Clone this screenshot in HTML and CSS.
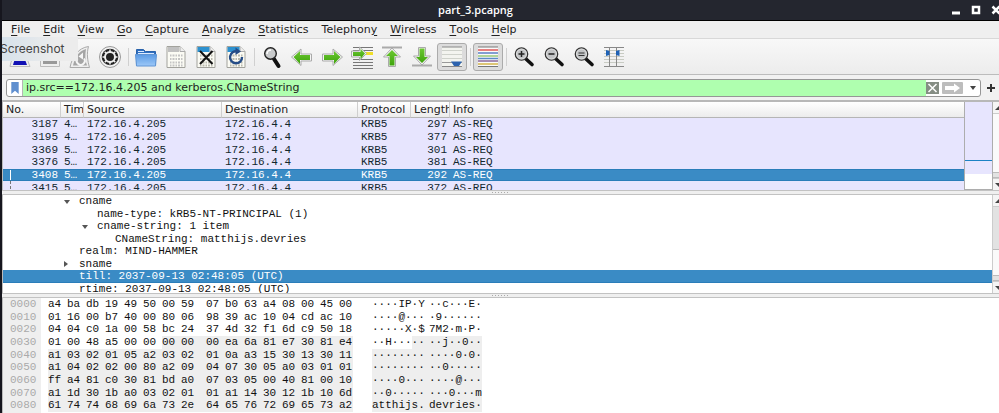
FILE: index.html
```html
<!DOCTYPE html>
<html lang="en">
<head>
<meta charset="utf-8">
<title>part_3.pcapng</title>
<link rel="stylesheet" href="styles.css">
</head>
<body>
<svg class="defs" aria-hidden="true">
  <defs>
    <linearGradient id="green" x1="0" y1="0" x2="0" y2="1"><stop offset="0" stop-color="#6cc832"/><stop offset="1" stop-color="#3ea30c"/></linearGradient>
    <linearGradient id="folder" x1="0" y1="0" x2="0" y2="1"><stop offset="0" stop-color="#5a9ae4"/><stop offset="1" stop-color="#9cc8f8"/></linearGradient>
    <symbol id="lens" viewBox="0 0 24 24">
      <path d="M14 14l6 5.500" stroke="#111" stroke-width="3.600" stroke-linecap="round"/>
      <circle cx="9.500" cy="9" r="6.200" fill="#c2c4c6" stroke="#333" stroke-width="1.300"/>
      <circle cx="9.500" cy="9" r="5" fill="none" stroke="#e4e4e4" stroke-width=".8"/>
    </symbol>
    <symbol id="page" viewBox="0 0 24 24">
      <path d="M3 1.500h13l5 5v16H3z" fill="#fbfbf4" stroke="#a2a29c"/>
      <path d="M16 1.500v5h5" fill="#eee" stroke="#aaa"/>
    </symbol>
    <symbol id="digits" viewBox="0 0 24 24">
      <path d="M6 10.500h13M6 14h13M6 17.500h13M6 20.500h13" stroke-width="2" stroke-dasharray="1.500 1 2 1"/>
    </symbol>
  </defs>
</svg>
<div class="window">
  <header class="titlebar">
    <h1>part_3.pcapng</h1>
    <div class="window-buttons">
      <button aria-label="Minimize"><svg viewBox="0 0 10 10"><path d="M1 8h8" stroke="#fff" stroke-width="3"/></svg></button>
      <button aria-label="Maximize"><svg viewBox="0 0 10 10"><path d="M2 2h6v6H2z" fill="none" stroke="#fff" stroke-width="2.500"/></svg></button>
      <button aria-label="Close"><svg viewBox="0 0 10 10"><path d="M1.500 1.500l7 7M8.500 1.500l-7 7" stroke="#fff" stroke-width="2.500"/></svg></button>
    </div>
  </header>

  <nav class="menubar">
    <button><u>F</u>ile</button><button><u>E</u>dit</button><button><u>V</u>iew</button><button><u>G</u>o</button><button><u>C</u>apture</button><button><u>A</u>nalyze</button><button><u>S</u>tatistics</button><button>Telephon<u>y</u></button><button><u>W</u>ireless</button><button><u>T</u>ools</button><button><u>H</u>elp</button>
  </nav>

  <div class="toolbar">
    <button aria-label="Start capture"><svg viewBox="0 0 24 24"><path d="M2 21.500C4 10 10 3 20 2c-2 6-1 13 2 19.500z" fill="#eee" stroke="#bbb"/><path d="M5 20C7 12 11 6 17 4.500c-1 5 0 11 2 15.500z" fill="#1111b4"/></svg></button>
    <button aria-label="Stop capture"><svg viewBox="0 0 24 24"><path d="M2.500 3.500h19v18h-19z" fill="#eee" stroke="#bbb"/><path d="M5 6h14v13H5z" fill="#999"/></svg></button>
    <button aria-label="Restart capture"><svg viewBox="0 0 24 24"><path d="M2 22.500C4 12 10 3 20.500 1.500c-2 7-1 14 1 21z" fill="#eee" stroke="#aaa"/><path d="M5 20.500C7 12 11 6 18 4c-1 6-1 12 1 16.500z" fill="#a5a5a5"/><path d="M9.500 13.500a4 4 0 1 0 6.500 0" fill="none" stroke="#f5f5f5" stroke-width="2"/><path d="M10.500 11.500l4.500-4v7z" fill="#f5f5f5"/></svg></button>
    <button aria-label="Capture options"><svg viewBox="0 0 24 24"><circle cx="12" cy="12" r="10.500" fill="#f1f1f1" stroke="#999"/><circle cx="12" cy="12" r="8.300" fill="#222"/><circle cx="12" cy="12" r="5" fill="none" stroke="#eee" stroke-width="2"/><path d="M12 4.500v3M12 16.500v3M4.500 12h3M16.500 12h3M6.700 6.700l2 2M15.300 15.300l2 2M17.300 6.700l-2 2M8.700 15.300l-2 2" stroke="#eee" stroke-width="1.500"/><circle cx="12" cy="12" r="2.800" fill="#222"/></svg></button>
    <i class="sep"></i>
    <button aria-label="Open file"><svg viewBox="0 0 24 24"><path d="M2.500 20V4.500h7l2 2h10V20z" fill="#2f6fc0" stroke="#2a63ab"/><path d="M4 6.500h6M4 8.500h16" stroke="#dceaff"/><path d="M1.500 9.500h21l-1 11.500h-19z" fill="url(#folder)" stroke="#6095d4"/></svg></button>
    <button aria-label="Save file"><svg viewBox="0 0 24 24"><use href="#page"/><path d="M4 2h11v5H4z" fill="#c0c0c0"/><use href="#digits" stroke="#c4c4c4"/></svg></button>
    <button aria-label="Close file"><svg viewBox="0 0 24 24"><use href="#page"/><path d="M3.500 2h12v5h-12z" fill="#2d91cf"/><use href="#digits" stroke="#b9b9ad"/><path d="M6 6l12.500 13M18.500 6L6 19" stroke="#111" stroke-width="2"/></svg></button>
    <button aria-label="Reload file"><svg viewBox="0 0 24 24"><use href="#page"/><path d="M3.500 2h12v5h-12z" fill="#2d91cf"/><use href="#digits" stroke="#b9b9ad"/><path d="M18 12a6 6 0 1 1-4.500-5.500" fill="none" stroke="#264d87" stroke-width="2.400"/><path d="M11.500 2.500l5.500 4-5.500 3.500z" fill="#264d87"/></svg></button>
    <i class="sep"></i>
    <button aria-label="Find packet"><svg viewBox="0 0 24 24"><path d="M14 14l4.500 7" stroke="#111" stroke-width="4" stroke-linecap="round"/><circle cx="10.500" cy="8.500" r="5.800" fill="#c8cacb" stroke="#222" stroke-width="1.400"/><path d="M7 9a4 4 0 0 1 4-4" fill="none" stroke="#fff" stroke-width="1.500"/></svg></button>
    <button aria-label="Previous packet"><svg viewBox="0 0 24 24"><path d="M1.500 12L11 4v5h10.500v7H11v4.500z" fill="#f5f5f5" stroke="#aaa"/><path d="M3.500 12L10 6v4h10v5H10v4z" fill="url(#green)"/></svg></button>
    <button aria-label="Next packet"><svg viewBox="0 0 24 24"><path d="M22.500 12L13 4v5H2.500v7H13v4.500z" fill="#f5f5f5" stroke="#aaa"/><path d="M20.500 12L14 6v4H4v5h10v4z" fill="url(#green)"/></svg></button>
    <button aria-label="Go to packet"><svg viewBox="0 0 24 24"><path d="M3 2.500h20M3 5.500h20M3 14.500h20M3 17.500h20M3 20.500h20M3 23.500h20" stroke="#777"/><path d="M16 8.500h7" stroke="#f0df27" stroke-width="3"/><path d="M16.500 8.500L9.500 2v4H1.500v6h8v3.500z" fill="#f5f5f5" stroke="#aaa"/><path d="M15 8.500L10.500 4v3H3v4h7.500v3z" fill="url(#green)"/></svg></button>
    <button aria-label="First packet"><svg viewBox="0 0 24 24"><path d="M2 2.500h20" stroke="#aaa" stroke-width="2"/><path d="M12 3L3.500 12h5v9.500h7V12h5z" fill="#f5f5f5" stroke="#aaa"/><path d="M12 5L6 11h3.500v9.500h5V11H18z" fill="url(#green)"/></svg></button>
    <button aria-label="Last packet"><svg viewBox="0 0 24 24"><path d="M2 20.500h20" stroke="#aaa" stroke-width="2"/><path d="M12 20L3.500 11h5V2.500h7V11h5z" fill="#f5f5f5" stroke="#aaa"/><path d="M12 18L6 12h3.500V3.500h5V12H18z" fill="url(#green)"/></svg></button>
    <button class="pressed" aria-label="Auto scroll"><svg viewBox="0 0 24 24"><path d="M2 2h20v20H2z" fill="#f3f4ef"/><path d="M2 2h20M2 21.500h20" stroke="#888"/><path d="M2 5.500h20M2 9.500h20M2 13.500h20" stroke="#cfd2cb"/><path d="M2 17.500h20" stroke="#999"/><path d="M11 16.500h11l-3 4.500h-5z" fill="#2d63ae"/></svg></button>
    <i class="sep"></i>
    <button class="pressed" aria-label="Colorize packets"><svg viewBox="0 0 24 24"><path d="M2 2h20v20H2z" fill="#fafafa"/><path d="M2 2h20M2 21.500h20" stroke="#777"/><path d="M2 5h20" stroke="#df5757" stroke-width="1.500"/><path d="M2 8h20" stroke="#5a7fc4" stroke-width="1.500"/><path d="M2 11h20" stroke="#99c977" stroke-width="1.500"/><path d="M2 13.500h20" stroke="#5b8bc7" stroke-width="1.500"/><path d="M2 16h20" stroke="#8b689b" stroke-width="1.500"/><path d="M2 19h20" stroke="#d4b448" stroke-width="1.500"/></svg></button>
    <i class="sep"></i>
    <button aria-label="Zoom in"><svg viewBox="0 0 24 24"><use href="#lens"/><path d="M6.500 9h6M9.500 6v6" stroke="#222" stroke-width="1.500"/></svg></button>
    <button aria-label="Zoom out"><svg viewBox="0 0 24 24"><use href="#lens"/><path d="M6.500 9h6" stroke="#222" stroke-width="1.500"/></svg></button>
    <button aria-label="Normal size"><svg viewBox="0 0 24 24"><use href="#lens"/><path d="M6.500 8h6M6.500 10.500h6" stroke="#333" stroke-width="1.200"/></svg></button>
    <button aria-label="Resize columns"><svg viewBox="0 0 24 24"><path d="M2 5.500h20M2 8.500h20M2 11.500h20M2 14.500h20M2 17.500h20" stroke="#c8cbc3"/><path d="M2 2.500h20M2 21.500h20M7.500 2v19M14.500 2v19" stroke="#888"/><path d="M4 5l3.500 1v4L4 11zM17.500 5L14 6v4l3.500 1z" fill="#1f62b5"/></svg></button>
  </div>

  <form class="filterbar">
    <div class="filter">
      <button type="button" class="bookmark" aria-label="Filter bookmarks"><svg viewBox="0 0 8 13"><path d="M0 0h8v13L4 9.500 0 13z" fill="#5f8fcf"/></svg></button>
      <input type="text" aria-label="Display filter" spellcheck="false" value="ip.src==172.16.4.205 and kerberos.CNameString">
      <button type="button" class="clear" aria-label="Clear filter"><svg viewBox="0 0 13 12"><path d="M0 0h13v12H0z" fill="#858d84"/><path d="M2.500 2l8 8M10.500 2l-8 8" stroke="#fff" stroke-width="1.500"/></svg></button>
      <button type="button" class="apply" aria-label="Apply filter"><svg viewBox="0 0 21 12"><rect width="21" height="12" rx="1" fill="#bdbdbd"/><path d="M3 4h9V1.500L18 6l-6 4.500V8H3z" fill="#fff"/></svg></button>
      <button type="button" class="recent" aria-label="Recent filters"><svg viewBox="0 0 6 4"><path d="M0 0h6L3 4z" fill="#444"/></svg></button>
    </div>
    <button type="button" class="add" aria-label="Add filter button"><svg viewBox="0 0 8 8"><path d="M0 4h8M4 0v8" stroke="#333" stroke-width="2"/></svg></button>
  </form>

  <section class="pane packets">
    <div class="packet-list">
      <table>
        <colgroup><col class="c-no"><col class="c-time"><col class="c-src"><col class="c-dst"><col class="c-proto"><col class="c-len"><col></colgroup>
        <thead><tr><th>No.</th><th>Time</th><th>Source</th><th>Destination</th><th>Protocol</th><th>Length</th><th>Info</th></tr></thead>
        <tbody>
          <tr><td>3187</td><td>4…</td><td>172.16.4.205</td><td>172.16.4.4</td><td>KRB5</td><td>297</td><td>AS-REQ</td></tr>
          <tr><td>3195</td><td>4…</td><td>172.16.4.205</td><td>172.16.4.4</td><td>KRB5</td><td>377</td><td>AS-REQ</td></tr>
          <tr><td>3369</td><td>5…</td><td>172.16.4.205</td><td>172.16.4.4</td><td>KRB5</td><td>301</td><td>AS-REQ</td></tr>
          <tr><td>3376</td><td>5…</td><td>172.16.4.205</td><td>172.16.4.4</td><td>KRB5</td><td>381</td><td>AS-REQ</td></tr>
          <tr class="selected"><td>3408</td><td>5…</td><td>172.16.4.205</td><td>172.16.4.4</td><td>KRB5</td><td>292</td><td>AS-REQ</td></tr>
          <tr class="related"><td>3415</td><td>5…</td><td>172.16.4.205</td><td>172.16.4.4</td><td>KRB5</td><td>372</td><td>AS-REQ</td></tr>
        </tbody>
      </table>
    </div>
    <div class="minimap"><i class="before"></i><i class="mark"></i><i class="after"></i></div>
    <div class="scroll"><i class="up"></i><i class="track"></i><i class="thumb end"></i><i class="down"></i></div>
  </section>
  <div class="splitter"></div>

  <section class="pane details">
    <ul class="tree">
      <li class="l1 open">cname</li>
      <li class="l2">name-type: kRB5-NT-PRINCIPAL (1)</li>
      <li class="l2 open">cname-string: 1 item</li>
      <li class="l3">CNameString: matthijs.devries</li>
      <li class="l1">realm: MIND-HAMMER</li>
      <li class="l1 closed">sname</li>
      <li class="l1 selected">till: 2037-09-13 02:48:05 (UTC)</li>
      <li class="l1">rtime: 2037-09-13 02:48:05 (UTC)</li>
    </ul>
    <div class="scroll"><i class="up"></i><i class="thumb"></i><i class="track"></i><i class="thumb end"></i><i class="down"></i></div>
  </section>
  <div class="splitter"></div>

  <section class="pane hex" id="hex"></section>
  <div class="tooltip">Screenshot</div>
</div>
<script src="hex.js"></script>
</body>
</html>
```
FILE: hex.js
```js
// Each row: offset, bytes, two ASCII groups. Bytes from SHADED on belong to the selected layer.
const SHADED = 54;
const rows = [
  ["0000", "a4 ba db 19 49 50 00 59 07 b0 63 a4 08 00 45 00", "····IP·Y", "··c···E·"],
  ["0010", "01 16 00 b7 40 00 80 06 98 39 ac 10 04 cd ac 10", "····@···", "·9······"],
  ["0020", "04 04 c0 1a 00 58 bc 24 37 4d 32 f1 6d c9 50 18", "·····X·$", "7M2·m·P·"],
  ["0030", "01 00 48 a5 00 00 00 00 00 ea 6a 81 e7 30 81 e4", "··H·····", "··j··0··"],
  ["0040", "a1 03 02 01 05 a2 03 02 01 0a a3 15 30 13 30 11", "········", "····0·0·"],
  ["0050", "a1 04 02 02 00 80 a2 09 04 07 30 05 a0 03 01 01", "········", "··0·····"],
  ["0060", "ff a4 81 c0 30 81 bd a0 07 03 05 00 40 81 00 10", "····0···", "····@···"],
  ["0070", "a1 1d 30 1b a0 03 02 01 01 a1 14 30 12 1b 10 6d", "··0·····", "···0···m"],
  ["0080", "61 74 74 68 69 6a 73 2e 64 65 76 72 69 65 73 a2", "atthijs.", "devries·"]
];
const el = (cls, text) => {
  const s = document.createElement("span");
  s.className = cls;
  s.textContent = text || "";
  return s;
};
rows.forEach(([offset, bytes, left, right], r) => {
  const line = document.createElement("div");
  line.className = "hex-row";
  line.append(el("offset", offset));
  const group = el("bytes");
  bytes.split(" ").forEach((b, i) => {
    group.append(el(r * 16 + i >= SHADED ? "byte shaded" : "byte", b));
  });
  line.append(group);
  const ascii = el("ascii");
  [left, right].forEach((half, h) => {
    const start = r * 16 + h * 8;
    const plain = Math.min(8, Math.max(0, SHADED - start));
    const part = el("half");
    if (plain) part.append(el("plain", half.slice(0, plain)));
    if (plain < 8) part.append(el("fill shaded", half.slice(plain)));
    ascii.append(part);
  });
  line.append(ascii);
  document.getElementById("hex").append(line);
});
```
FILE: styles.css
```css
* { box-sizing: border-box; }
body { margin: 0; font: 11px/14px "DejaVu Sans", sans-serif; color: #222; background: #efefef; }
button { border: 0; padding: 0; background: none; font: inherit; color: inherit; display: flex; align-items: center; justify-content: center; }
svg { display: block; }
.defs { position: absolute; width: 0; height: 0; }
.window { position: relative; height: 100vh; overflow: hidden; display: flex; flex-direction: column; border-left: 2px solid #16161e; }

.titlebar { flex: none; height: 21px; margin-left: -2px; display: grid; grid-template-columns: 1fr auto 1fr; align-items: center; background: #24262f; border-bottom: 1px solid #000; color: #fff; }
.titlebar h1 { grid-column: 2; margin: 0; padding-right: 48px; font: 600 11px/16px "Open Sans", sans-serif; }
.window-buttons { display: flex; gap: 10px; justify-content: flex-end; margin-right: -2px; }
.window-buttons svg { width: 10px; height: 10px; }

.menubar { flex: none; height: 18px; padding: 0 9px; display: flex; gap: 13px; align-items: center; background: #efefef; border-bottom: 1px solid #d8d8d8; }
.menubar u { text-underline-offset: 2px; }

.toolbar { flex: none; height: 36px; padding-left: 3px; display: flex; align-items: center; background: linear-gradient(#f8f8f8, #ececec); border-bottom: 1px solid #bcbcbc; }
.toolbar button { width: 30px; height: 28px; border: 1px solid transparent; border-radius: 3px; }
.toolbar svg { width: 24px; height: 24px; }
.toolbar .pressed { background: #dcdcdc; border-color: #ababab; }
.sep { width: 6px; height: 18px; background: linear-gradient(#d0d0d0, #d0d0d0) center / 1px 100% no-repeat; }

.filterbar { flex: none; height: 27px; display: flex; align-items: center; gap: 6px; padding: 0 4px; border-bottom: 2px solid #b8b8b8; background: #f1f1f1; }
.filter { flex: 1; height: 18px; display: flex; align-items: center; border: 1px solid #969696; border-radius: 3px; background: #fff; overflow: hidden; }
.bookmark { width: 16px; height: 100%; border-right: 1px solid #b5b5b5; }
.bookmark svg { width: 8px; height: 12px; }
.filter input { flex: 1; min-width: 0; height: 100%; border: 0; padding: 0 3px; outline: 0; background: #afffaf; font: inherit; color: #222; }
.clear svg { width: 13px; height: 12px; }
.apply { margin: 0 7px 0 3px; }
.apply svg { width: 21px; height: 12px; }
.recent { margin-right: 4px; }
.recent svg { width: 6px; height: 4px; }
.add svg { width: 8px; height: 8px; }

.pane { flex: none; display: flex; overflow: hidden; background: #fff; border-left: 1px solid #bbb; font-family: "Liberation Mono", monospace; line-height: 12px; color: #111; }
.packets { height: 88px; }
.packet-list { flex: 1; min-width: 0; background: #e7e5fe; }
table { width: 100%; height: 92px; table-layout: fixed; border-collapse: separate; border-spacing: 0; }
.c-no { width: 58px; }
.c-time { width: 23px; }
.c-src { width: 138px; }
.c-dst { width: 136px; }
.c-proto { width: 53px; }
.c-len { width: 39px; }
th { height: 16px; padding: 0 0 0 3px; overflow: hidden; white-space: nowrap; text-align: left; font: 11px/15px "DejaVu Sans", sans-serif; color: #222; background: linear-gradient(#fff, #ececec); border-right: 1px solid #cfcfcf; border-bottom: 1px solid #b5b5b5; }
th:last-child { border-right: 0; }
td { padding: 0 3px; white-space: nowrap; color: #12272e; }
td:first-child, td:nth-child(6) { text-align: right; }
.packets .selected td { color: #fff; background: #3a8bc5; box-shadow: inset 0 1px #2a7db9, inset 0 -1px #2a7db9; }
.packets .selected td:first-child { background: linear-gradient(#fff, #fff) 7px 0 / 1px 100% no-repeat #3a8bc5; }
.related td:first-child { background: repeating-linear-gradient(#777 0 3px, transparent 3px 5px) 7px 0 / 1px 100% no-repeat; }
.minimap { flex: none; width: 29px; display: flex; flex-direction: column; border: solid #adadad; border-width: 0 1px 1px; }
.minimap .before { height: 58px; background: #e7e5fe; }
.minimap .mark { height: 1px; background: #1b82c4; }
.minimap .after { height: 13px; background: #e7e5fe; }

.scroll { flex: none; width: 6px; display: flex; flex-direction: column; background: #fafafa; }
.scroll .up, .scroll .down { height: 12px; background: #f5f5f5; overflow: hidden; }
.scroll .up { border-bottom: 1px solid #ccc; }
.scroll .down { border-top: 1px solid #ccc; }
.scroll .up::before, .scroll .down::before { content: ""; display: block; margin: 4px 0 0 2px; border: solid transparent; border-width: 0 4px; }
.scroll .up::before { border-bottom: 4px solid #444; }
.scroll .down::before { border-top: 4px solid #444; }
.scroll .track { flex: 1; }
.scroll .thumb { height: 43px; background: #e2e2e2; border-bottom: 1px solid #bbb; }
.scroll .end { height: 6px; border-top: 1px solid #bbb; }

.splitter { flex: none; height: 5px; display: flex; align-items: center; justify-content: center; background: #efefef; border: solid #c2c2c2; border-width: 1px 0; }
.splitter::after { content: ""; width: 17px; height: 1px; background: repeating-linear-gradient(90deg, #aaa 0 1px, transparent 1px 3px); }

.details { height: 98px; }
.tree { flex: 1; height: 101px; margin: 0; padding: 0; list-style: none; display: grid; grid-template-rows: repeat(8, 1fr); border-right: 1px solid #ccc; }
.tree li { position: relative; white-space: pre; }
.l1 { padding-left: 76px; }
.l2 { padding-left: 94px; }
.l3 { padding-left: 112px; }
.tree .selected { color: #fff; background: #3a8bc5; border-bottom: 1px solid #2a7db9; }
.open::before, .closed::before { content: ""; position: absolute; margin-left: -15px; top: 5px; border: solid transparent; }
.open::before { border-width: 4px 3px 0; border-top-color: #555; }
.closed::before { top: 3px; border-width: 3px 0 3px 4px; border-left-color: #555; }

.hex { flex: 1; display: grid; grid-template-rows: repeat(9, 1fr); padding-bottom: 1px; background: linear-gradient(#efefef, #efefef) 0 0 / 38px 100% no-repeat #fff; }
.hex-row { display: flex; white-space: pre; }
.hex-row span { display: flex; }
.hex-row .offset { width: 38px; padding-left: 7px; color: #aaa; }
.hex-row .bytes { padding-left: 7px; }
.hex-row .byte { width: 19px; }
.hex-row .byte:nth-child(8) { width: 25px; }
.hex-row .byte:last-child { width: 14px; }
.hex-row .ascii { padding-left: 19px; }
.hex-row .half { width: 57px; }
.hex-row .half:last-child { width: 53px; }
.hex-row .fill { flex: 1; }
.hex-row .shaded { background: #eee; }

.tooltip { position: absolute; left: -2px; top: 37px; width: 78px; height: 24px; font: 12px/23px Inter, sans-serif; color: #444; background: linear-gradient(100deg, #d5e1eb, #ececec 70%); }
```
